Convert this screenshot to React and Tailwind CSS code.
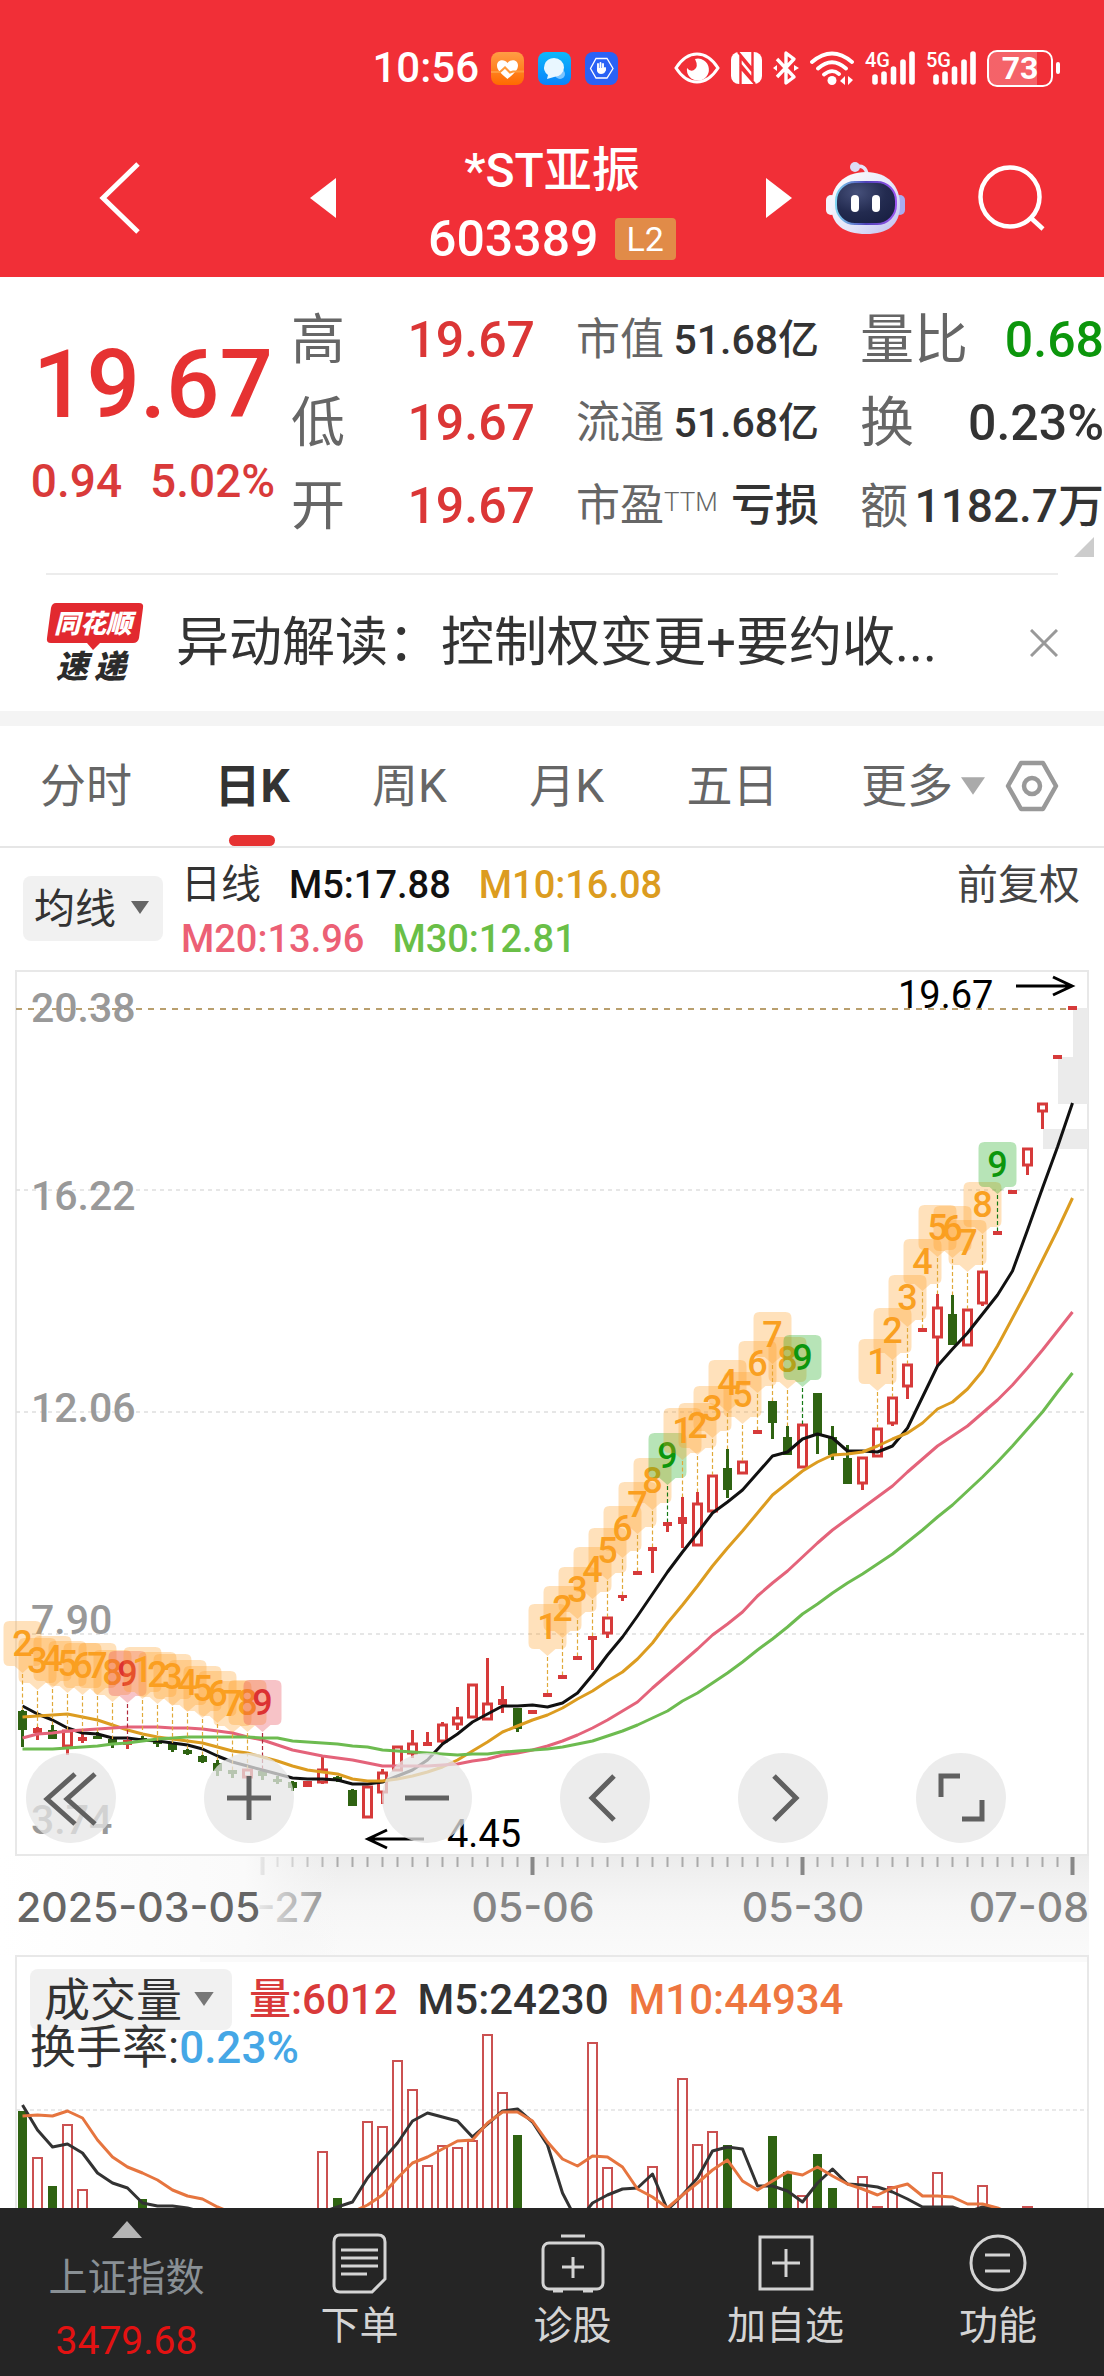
import React from "react";

const X0 = 22.5;
const STEP = 15;
const xAt = (i) => X0 + STEP * i;

/* [high, bodyTop, bodyBottom, low, kind]; r = rising, g = falling, s = solid rising */
const candles = [
  [1710, 1711, 1730, 1747, "g"], [1727, 1728, 1733, 1740, "s"], [1725, 1730, 1739, 1739, "g"], [1730, 1730, 1747, 1755, "r"],
  [1732, 1737, 1741, 1743, "s"], [1732, 1736, 1739, 1739, "g"], [1739, 1739, 1743, 1748, "g"], [1740, 1740, 1745, 1749, "s"],
  [1736, 1738, 1742, 1742, "g"], [1741, 1741, 1744, 1747, "g"], [1743, 1743, 1750, 1752, "g"], [1749, 1750, 1754, 1755, "g"],
  [1755, 1756, 1762, 1763, "g"], [1760, 1763, 1771, 1776, "g"], [1770, 1770, 1774, 1778, "g"], [1769, 1769, 1778, 1778, "r"],
  [1769, 1771, 1776, 1780, "g"], [1776, 1779, 1782, 1784, "g"], [1781, 1782, 1788, 1791, "g"], [1781, 1781, 1787, 1787, "s"],
  [1757, 1769, 1783, 1784, "r"], [1776, 1777, 1780, 1782, "g"], [1789, 1790, 1806, 1806, "g"], [1786, 1786, 1818, 1818, "r"],
  [1769, 1772, 1793, 1804, "r"], [1746, 1746, 1771, 1771, "r"], [1730, 1743, 1754, 1758, "r"], [1732, 1742, 1746, 1746, "s"],
  [1722, 1724, 1742, 1744, "r"], [1707, 1717, 1725, 1730, "r"], [1684, 1684, 1718, 1718, "r"], [1658, 1703, 1720, 1720, "r"],
  [1686, 1699, 1705, 1713, "s"], [1708, 1708, 1729, 1732, "g"], [1710, 1710, 1714, 1714, "s"], [1693, 1693, 1697, 1697, "s"],
  [1675, 1675, 1679, 1679, "s"], [1656, 1656, 1660, 1660, "s"], [1636, 1636, 1640, 1670, "s"], [1617, 1617, 1634, 1638, "r"],
  [1595, 1595, 1598, 1601, "s"], [1571, 1571, 1575, 1575, "s"], [1547, 1547, 1551, 1573, "s"], [1522, 1522, 1526, 1532, "s"],
  [1497, 1517, 1524, 1548, "s"], [1492, 1503, 1546, 1546, "r"], [1475, 1475, 1512, 1512, "r"], [1449, 1468, 1490, 1498, "g"],
  [1461, 1461, 1474, 1474, "r"], [1430, 1430, 1434, 1434, "s"], [1401, 1401, 1423, 1439, "g"], [1426, 1437, 1455, 1455, "g"],
  [1424, 1424, 1468, 1468, "r"], [1393, 1393, 1434, 1454, "g"], [1426, 1437, 1455, 1460, "g"], [1445, 1458, 1484, 1484, "g"],
  [1457, 1457, 1484, 1490, "r"], [1428, 1428, 1457, 1457, "r"], [1397, 1397, 1424, 1426, "r"], [1364, 1364, 1387, 1399, "r"],
  [1328, 1328, 1332, 1332, "s"], [1294, 1307, 1338, 1366, "r"], [1295, 1314, 1345, 1345, "g"], [1309, 1309, 1346, 1346, "r"],
  [1271, 1271, 1304, 1306, "r"], [1231, 1231, 1235, 1235, "s"], [1190, 1190, 1194, 1194, "s"], [1148, 1148, 1166, 1175, "r"],
  [1103, 1103, 1112, 1129, "r"], [1055, 1055, 1059, 1059, "s"], [1006, 1006, 1010, 1010, "s"],
];

const ma5 = [1706, 1714, 1720, 1728, 1733, 1734, 1738, 1738, 1740, 1741, 1743, 1745, 1749, 1756, 1762, 1766, 1770, 1774, 1778, 1779, 1779, 1780, 1784, 1784, 1782, 1776, 1770, 1760, 1744, 1734, 1722, 1714, 1706, 1706, 1705, 1707, 1703, 1693, 1675, 1655, 1637, 1616, 1594, 1572, 1552, 1533, 1513, 1502, 1490, 1473, 1456, 1452, 1439, 1434, 1438, 1451, 1451, 1452, 1446, 1428, 1397, 1366, 1349, 1333, 1314, 1295, 1271, 1230, 1188, 1147, 1103];
const ma10 = [1717, 1716, 1715, 1714, 1717, 1720, 1725, 1730, 1734, 1737, 1739, 1741, 1743, 1747, 1751, 1753, 1757, 1761, 1766, 1770, 1772, 1774, 1779, 1781, 1781, 1779, 1776, 1772, 1767, 1760, 1751, 1742, 1732, 1726, 1720, 1715, 1708, 1699, 1691, 1681, 1672, 1659, 1643, 1623, 1605, 1586, 1566, 1548, 1531, 1513, 1495, 1483, 1471, 1462, 1455, 1454, 1452, 1446, 1439, 1433, 1423, 1409, 1402, 1389, 1371, 1346, 1318, 1290, 1260, 1230, 1198];
const ma20 = [1738, 1734, 1733, 1731, 1730, 1729, 1728, 1727, 1727, 1727, 1728, 1728, 1729, 1731, 1733, 1737, 1740, 1745, 1750, 1753, 1756, 1758, 1760, 1763, 1766, 1766, 1766, 1766, 1765, 1764, 1761, 1759, 1755, 1753, 1750, 1746, 1741, 1735, 1728, 1720, 1711, 1702, 1688, 1675, 1662, 1649, 1635, 1624, 1612, 1596, 1583, 1571, 1557, 1543, 1530, 1519, 1508, 1497, 1486, 1472, 1459, 1446, 1436, 1426, 1413, 1400, 1385, 1368, 1350, 1331, 1312];
const ma30 = [1749, 1749, 1749, 1748, 1747, 1746, 1744, 1743, 1741, 1739, 1738, 1737, 1737, 1737, 1737, 1737, 1738, 1738, 1741, 1742, 1743, 1744, 1746, 1747, 1750, 1751, 1752, 1753, 1754, 1755, 1754, 1754, 1752, 1751, 1750, 1749, 1747, 1744, 1741, 1736, 1731, 1725, 1718, 1711, 1701, 1693, 1683, 1673, 1662, 1650, 1639, 1627, 1614, 1604, 1593, 1583, 1574, 1564, 1554, 1542, 1530, 1517, 1505, 1491, 1477, 1462, 1446, 1429, 1412, 1392, 1373];

/* runs of the nine-count signal: first candle, first number, colour of the nine */
const runs = [
  [0, 2, "red"], [8, 1, "red"], [35, 1, "green"], [44, 1, "green"], [57, 1, "green"],
];
const tones = {
  orange: { fill: "#ff9d1e", text: "#f9a021", line: "#e0a93a" },
  red: { fill: "#e63946", text: "#dc3232", line: "#b02a3a" },
  green: { fill: "#12a512", text: "#0c960c", line: "#157a15" },
};
const marks = runs.flatMap(([start, first, nine]) =>
  Array.from({ length: 10 - first }, (_, k) => ({
    i: start + k,
    n: first + k,
    tone: first + k === 9 ? nine : "orange",
  }))
);

const bars = [
  [0, 2111, "g"], [1, 2157, "r"], [2, 2186, "g"], [3, 2124, "r"], [4, 2189, "r"], [8, 2199, "g"],
  [20, 2151, "r"], [21, 2198, "g"], [23, 2121, "r"], [24, 2126, "r"], [25, 2060, "r"], [26, 2089, "r"],
  [27, 2165, "r"], [28, 2145, "r"], [29, 2147, "r"], [30, 2140, "r"], [31, 2034, "r"], [32, 2092, "r"], [33, 2135, "g"],
  [38, 2042, "r"], [39, 2167, "r"], [42, 2166, "r"], [44, 2078, "r"], [45, 2144, "r"], [46, 2131, "r"], [47, 2145, "g"],
  [50, 2136, "g"], [51, 2172, "g"], [52, 2195, "r"], [53, 2154, "g"], [54, 2188, "g"], [56, 2176, "r"], [57, 2206, "r"],
  [58, 2186, "r"], [61, 2172, "r"], [64, 2185, "r"], [67, 2206, "r"],
];
const vol5 = [2105, 2130, 2147, 2144, 2153, 2173, 2183, 2188, 2203, 2206, 2206, 2208, 2212, 2216, 2220, 2220, 2220, 2220, 2218, 2216, 2212, 2207, 2202, 2178, 2160, 2143, 2121, 2113, 2117, 2121, 2137, 2124, 2111, 2109, 2122, 2145, 2193, 2222, 2203, 2195, 2189, 2188, 2174, 2210, 2195, 2178, 2151, 2147, 2149, 2186, 2186, 2191, 2202, 2183, 2169, 2184, 2185, 2187, 2192, 2199, 2207, 2207, 2207, 2212, 2207, 2209, 2216];
const vol10 = [2116, 2115, 2116, 2111, 2118, 2140, 2157, 2167, 2173, 2180, 2190, 2196, 2199, 2207, 2213, 2218, 2220, 2220, 2220, 2220, 2220, 2218, 2212, 2205, 2195, 2178, 2163, 2157, 2149, 2141, 2140, 2123, 2112, 2112, 2121, 2142, 2159, 2166, 2156, 2157, 2167, 2189, 2197, 2208, 2195, 2183, 2170, 2160, 2181, 2190, 2181, 2172, 2175, 2167, 2176, 2184, 2189, 2195, 2188, 2184, 2196, 2196, 2197, 2204, 2204, 2208, 2214];

const points = (ys) => ys.map((y, i) => `${xAt(i)},${y}`).join(" ");

const RED = "#d63a3a";
const GREEN = "#2f6312";

function Line({ ys, color, width = 3 }) {
  return <polyline points={points(ys)} fill="none" stroke={color} strokeWidth={width} strokeLinejoin="round" />;
}

function Candle({ i, data }) {
  const [high, top, bottom, low, kind] = data;
  const x = xAt(i);
  const color = kind === "g" ? GREEN : RED;
  return (
    <g>
      {high < top && <rect x={x - 1.5} y={high} width="3" height={top - high} fill={color} />}
      {low > bottom && <rect x={x - 1.5} y={bottom} width="3" height={low - bottom} fill={color} />}
      {kind === "r" ? (
        <rect x={x - 4} y={top + 1} width="8" height={bottom - top - 2} fill="#fff" stroke={color} strokeWidth="3" />
      ) : (
        <rect x={x - 4.5} y={top} width="9" height={bottom - top} fill={color} />
      )}
    </g>
  );
}

function Mark({ i, n, tone }) {
  const x = xAt(i);
  const high = candles[i][0];
  const top = high - 89;
  const c = tones[tone];
  return (
    <g>
      <path
        d={`M${x - 13} ${top}h26q6 0 6 6v33q0 6-6 6h-5l-8 7l-8-7h-5q-6 0-6-6v-33q0-6 6-6z`}
        fill={c.fill}
        fillOpacity="0.3"
      />
      <line x1={x} x2={x} y1={top + 53} y2={high} stroke={c.line} strokeWidth="1.2" strokeDasharray="4 2.5" />
      <text x={x} y={top + 35} textAnchor="middle" fontSize="36" fontWeight="500" fill={c.text}>{n}</text>
    </g>
  );
}

function PriceChart() {
  return (
    <svg viewBox="0 970 1104 985" className="block w-full" role="img" aria-label="日K线图">
      <defs>
        <linearGradient id="axisShade" x1="0" y1="0" x2="0" y2="1">
          <stop offset="0" stopColor="#ececec" />
          <stop offset="0.5" stopColor="#f6f6f6" />
          <stop offset="1" stopColor="#fafafa" />
        </linearGradient>
        <linearGradient id="axisFade" x1="0" y1="0" x2="1" y2="0">
          <stop offset="0" stopColor="#fff" />
          <stop offset="0.72" stopColor="#fafafa" />
          <stop offset="1" stopColor="#f4f4f4" stopOpacity="0" />
        </linearGradient>
      </defs>
      <path d="M16 971H1088V1855H16Z" fill="#fff" stroke="#e8e8e8" strokeWidth="2" />
      {[1190, 1412, 1634].map((y) => (
        <line key={y} x1="16" x2="1088" y1={y} y2={y} stroke="#dedede" strokeWidth="1.5" strokeDasharray="4 4" />
      ))}
      <line x1="16" x2="1088" y1="1009" y2="1009" stroke="#b99f6e" strokeWidth="2" strokeDasharray="6 6" />
      <g fill="#ebebeb">
        <rect x="1073" y="1008" width="15" height="49" />
        <rect x="1058" y="1057" width="30" height="47" />
        <rect x="1043" y="1129" width="45" height="20" />
      </g>
      <g fill="#999" fontSize="41" fontWeight="500">
        <text x="31" y="1022">20.38</text>
        <text x="31" y="1210">16.22</text>
        <text x="31" y="1422">12.06</text>
        <text x="31" y="1634">7.90</text>
        <text x="31" y="1834">3.74</text>
      </g>
      {candles.map((c, i) => <Candle key={i} i={i} data={c} />)}
      <Line ys={ma5} color="#111" />
      <Line ys={ma10} color="#dc9c20" />
      <Line ys={ma20} color="#e4637a" />
      <Line ys={ma30} color="#6dbb50" />
      {marks.map((m) => <Mark key={m.i} {...m} />)}
      <g fill="#000" fontSize="38">
        <text x="898" y="1008">19.67</text>
        <text x="447" y="1847">4.45</text>
      </g>
      <g fill="none" stroke="#000" strokeWidth="3">
        <path d="M1016 986H1071M1053 977L1072 986L1053 995" />
        <path d="M424 1839H369M387 1830L368 1839L387 1848" />
      </g>
      <rect x="0" y="1856" width="1089" height="99" fill="url(#axisShade)" />
      {Array.from({ length: 55 }, (_, k) => k + 16).map((i) => {
        const major = (i - 16) % 18 === 0;
        return (
          <rect key={i} x={xAt(i) - (major ? 2 : 1)} y="1857" width={major ? 4 : 2} height={major ? 18 : 10} fill={major ? "#888" : "#aaa"} />
        );
      })}
      <g fill="#858585" fontSize="41" fontWeight="500" fontFamily="Inter, sans-serif">
        <text x="323" y="1922" textAnchor="end">-27</text>
        <text x="533" y="1922" textAnchor="middle">05-06</text>
        <text x="803" y="1922" textAnchor="middle">05-30</text>
        <text x="1089" y="1922" textAnchor="end">07-08</text>
      </g>
      <rect x="0" y="1856" width="340" height="99" fill="url(#axisFade)" />
      <text x="16" y="1922" fontSize="41" fontWeight="500" fontFamily="Inter, sans-serif" fill="#666">2025-03-05</text>
    </svg>
  );
}

function VolumeChart() {
  return (
    <svg viewBox="0 1955 1104 253" className="block w-full" role="img" aria-label="成交量图">
      <rect x="200" y="1955" width="889" height="7" fill="#fafafa" />
      <path d="M16 2210V1956H1088V2210" fill="none" stroke="#e8e8e8" strokeWidth="2" />
      <line x1="16" x2="1088" y1="2110" y2="2110" stroke="#e2e2e2" strokeWidth="1.5" strokeDasharray="4 3" />
      {bars.map(([i, y, kind]) =>
        kind === "g" ? (
          <rect key={i} x={xAt(i) - 4.5} y={y} width="9" height={2220 - y} fill={GREEN} />
        ) : (
          <rect key={i} x={xAt(i) - 4.5} y={y + 1} width="9" height={2220 - y} fill="#fff" stroke="#cb5151" strokeWidth="2" />
        )
      )}
      <Line ys={vol5} color="#333" />
      <Line ys={vol10} color="#e6753f" />
    </svg>
  );
}

function Caret({ className }) {
  return (
    <svg viewBox="0 0 18 13" className={className} aria-hidden="true">
      <path d="M0 0h18L9 13z" fill="currentColor" />
    </svg>
  );
}

function Signal({ label }) {
  return (
    <svg viewBox="0 0 50 36" className="h-9 w-[50px] overflow-visible" role="img" aria-label={label}>
      <text x="0" y="17" fontSize="20" fontWeight="500" fill="#fff">{label}</text>
      <g stroke="#fff" strokeWidth="5.6" strokeLinecap="round">
        <path d="M10 27V32M19 24V32M28.500 19V32M38 12V32M47 4V32" />
      </g>
    </svg>
  );
}

function StatusBar() {
  return (
    <div className="flex items-center justify-end pr-11 pt-11 text-white">
      <time className="mr-3 text-[42px] font-medium leading-[48px]">10:56</time>
      <div className="mr-14 flex items-center gap-[14px]">
        <svg viewBox="0 0 33 33" className="size-[33px]" aria-label="健康">
          <defs>
            <linearGradient id="healthBg" x1="0" y1="0" x2="0" y2="1"><stop stopColor="#ff9d45" /><stop offset="1" stopColor="#ff6a00" /></linearGradient>
          </defs>
          <rect width="33" height="33" rx="8" fill="url(#healthBg)" />
          <path d="M16.500 27C10 21.500 6 18 6 13.500C6 7.500 13.500 6.500 16.500 11C19.500 6.500 27 7.500 27 13.500C27 18 23 21.500 16.500 27Z" fill="#fff" />
          <path d="M0 20H9L14 15.500L19 20.500L22 19.500H33" fill="none" stroke="#ff9a3c" strokeWidth="2" />
        </svg>
        <svg viewBox="0 0 33 33" className="size-[33px]" aria-label="信息">
          <defs>
            <linearGradient id="chatBg" x1="0" y1="0" x2="0" y2="1"><stop stopColor="#0db8fb" /><stop offset="1" stopColor="#0a83fb" /></linearGradient>
          </defs>
          <rect width="33" height="33" rx="8" fill="url(#chatBg)" />
          <circle cx="22" cy="22" r="5" fill="#7cc5ff" />
          <path d="M16 6a10 9.500 0 1 1 0 19l-7 2l1-4A10 9.500 0 0 1 16 6z" fill="#e9f7ff" />
        </svg>
        <svg viewBox="0 0 33 33" className="size-[33px]" aria-label="隐私保护">
          <rect width="33" height="33" rx="8" fill="#2a62f5" />
          <path d="M11 6.500H22L28 16.500L22 26H11L5.500 16.500Z" fill="none" stroke="#fff" strokeWidth="1.300" />
          <path d="M13 12v6M15.500 11v7M18 12v6M20 18v-2" stroke="#fff" strokeWidth="1.900" strokeLinecap="round" />
          <path d="M12 16h8.500v3q-1 3-4.500 3q-3 0-4-3z" fill="#fff" />
        </svg>
      </div>
      <div className="flex items-center gap-[11px]">
        <svg viewBox="0 0 46 32" className="h-8 w-[46px]" aria-label="护眼模式">
          <path d="M2 16Q11 2 23 2T44 16Q35 30 23 30T2 16Z" fill="none" stroke="#fff" strokeWidth="3" />
          <path d="M21 7A11 11 0 1 1 13 16Q16 20 20 18Q25 15 21 7Z" fill="#fff" />
        </svg>
        <svg viewBox="0 0 31 32" className="h-8 w-[31px]" aria-label="NFC">
          <rect width="31" height="32" rx="8" fill="#fff" />
          <path d="M9.500 32V5L22 20M21.500 0V27L9 12M7 0L22 18M9 15L24 32" fill="none" stroke="#f12f37" strokeWidth="2.400" />
        </svg>
        <svg viewBox="0 0 26 36" className="h-9 w-[26px]" aria-label="蓝牙">
          <path d="M4 9L21 27L13 33V3L21 9L4 27" fill="none" stroke="#fff" strokeWidth="3.400" strokeLinejoin="round" />
          <path d="M0 18L4 15V21ZM26 18L21 15V21Z" fill="#fff" />
        </svg>
        <svg viewBox="0 0 44 34" className="h-[34px] w-11" aria-label="无线网络">
          <g fill="none" stroke="#fff" strokeWidth="3.800" strokeLinecap="round">
            <path d="M2 11Q22-6 42 11M8 17.500Q22 5 36 17.500M14 23.500Q22 17 29 23" />
          </g>
          <circle cx="22" cy="29.500" r="4.500" fill="#fff" />
          <path d="M30 30L35 25V34ZM38 25V34L43 29Z" fill="#fff" />
        </svg>
        <Signal label="4G" />
        <Signal label="5G" />
        <div className="flex items-center gap-[3px]">
          <div className="h-[37px] w-[66px] rounded-[10px] border-2 border-white bg-linear-to-r from-white/25 from-78% to-transparent to-78% text-center text-[32px] font-bold leading-[33px]">73</div>
          <div className="h-3 w-1 rounded-sm bg-white" />
        </div>
      </div>
    </div>
  );
}

function Robot() {
  return (
    <svg viewBox="0 0 80 74" className="h-[74px] w-20" aria-hidden="true">
      <defs>
        <linearGradient id="shell" x1="0" y1="0" x2="1" y2="1"><stop stopColor="#fff" /><stop offset="0.6" stopColor="#e3e4f8" /><stop offset="1" stopColor="#bcbdf0" /></linearGradient>
        <radialGradient id="visor" cx="0.35" cy="0.25" r="0.8"><stop stopColor="#46507a" /><stop offset="0.6" stopColor="#232b50" /><stop offset="1" stopColor="#1a2144" /></radialGradient>
        <linearGradient id="rim"><stop stopColor="#7fd4f2" /><stop offset="0.5" stopColor="#4e41b8" /><stop offset="1" stopColor="#9a55ee" /></linearGradient>
      </defs>
      <path d="M29 6Q40 3 41 14" fill="none" stroke="#e6e4f8" strokeWidth="3.500" />
      <circle cx="29" cy="6" r="5" fill="#dddcf5" />
      <rect x="0" y="34" width="10" height="20" rx="5" fill="#f3f3fc" />
      <rect x="69" y="34" width="10" height="20" rx="5" fill="#a9acf0" />
      <path d="M40 11C62 11 74 25 74 44C74 64 62 73 40 73C18 73 5 64 5 44C5 25 18 11 40 11Z" fill="url(#shell)" />
      <rect x="10" y="21" width="60" height="42" rx="19" fill="url(#visor)" stroke="url(#rim)" strokeWidth="2" />
      <rect x="25" y="34" width="8" height="17" rx="4" fill="#fff" />
      <rect x="46" y="34" width="8" height="17" rx="4" fill="#fff" />
    </svg>
  );
}

function Header() {
  return (
    <header className="bg-[#f12f37] text-white">
      <StatusBar />
      <div className="grid grid-cols-[1fr_240px_1fr] items-center pt-[46px] pb-[3px]">
        <div className="flex items-center justify-between pb-4 pl-[98px] pr-24">
          <button type="button" aria-label="返回" className="block">
            <svg viewBox="0 0 44 72" className="h-[72px] w-11"><path d="M40 2L5 36L40 70" fill="none" stroke="#fff" strokeWidth="5" /></svg>
          </button>
          <button type="button" aria-label="上一只" className="block">
            <svg viewBox="0 0 26 40" className="h-10 w-[26px]"><path d="M26 0V40L0 20Z" fill="#fff" /></svg>
          </button>
        </div>
        <div className="flex flex-col items-center whitespace-nowrap">
          <h1 className="text-[48px] font-medium leading-[66px]">*ST亚振</h1>
          <div className="flex items-center gap-4 leading-[70px]">
            <span className="text-[50px] font-medium">603389</span>
            <span className="rounded-sm bg-[#e18b48] px-3 text-[34px] leading-[42px]">L2</span>
          </div>
        </div>
        <div className="flex items-center pb-4 pl-[94px]">
          <button type="button" aria-label="下一只" className="mr-[34px] block">
            <svg viewBox="0 0 26 40" className="h-10 w-[26px]"><path d="M0 0V40L26 20Z" fill="#fff" /></svg>
          </button>
          <button type="button" aria-label="智能助手" className="block"><Robot /></button>
          <button type="button" aria-label="搜索" className="ml-auto mr-[58px] block">
            <svg viewBox="0 0 68 68" className="size-[68px]"><g fill="none" stroke="#fff" strokeWidth="4.500"><circle cx="32" cy="33" r="29.500" /><path d="M53 54L65 65" /></g></svg>
          </button>
        </div>
      </div>
    </header>
  );
}

function Row({ label, sup, value, labelClass, valueClass }) {
  return (
    <div className="flex items-center justify-between leading-[83px] whitespace-nowrap">
      <dt className={labelClass}>{label}{sup && <span className="align-[10px] text-[26px] leading-none font-light">{sup}</span>}</dt>
      <dd className={valueClass}>{value}</dd>
    </div>
  );
}

function Quote() {
  const big = "text-[54px] text-[#666]";
  const mid = "text-[44px] text-[#666]";
  const red = "text-[50px] font-medium text-[#db3636]";
  const dark = "text-[41px] font-medium text-[#333]";
  return (
    <section className="relative grid grid-cols-[277fr_258fr_284fr_285fr] pt-[22px] pb-[25px]">
      <div className="flex flex-col items-center pl-[29px] text-[#e63232]">
        <strong className="pt-8 text-[94px] font-medium leading-[108px]">19.67</strong>
        <p className="flex gap-7 pt-3 text-[46px] font-medium leading-[60px] text-[#d93a3a]"><span>0.94</span><span>5.02%</span></p>
      </div>
      <dl className="pl-[14px]">
        <Row label="高" value="19.67" labelClass={big} valueClass={red} />
        <Row label="低" value="19.67" labelClass={big} valueClass={red} />
        <Row label="开" value="19.67" labelClass={big} valueClass={red} />
      </dl>
      <dl className="pl-[41px]">
        <Row label="市值" value="51.68亿" labelClass={mid} valueClass={dark} />
        <Row label="流通" value="51.68亿" labelClass={mid} valueClass={dark} />
        <Row label="市盈" sup="TTM" value="亏损" labelClass={mid} valueClass="text-[44px] font-medium text-[#333]" />
      </dl>
      <dl className="pl-[41px]">
        <Row label="量比" value="0.68" labelClass={big} valueClass="text-[50px] font-medium text-[#0c960c]" />
        <Row label="换" value="0.23%" labelClass={big} valueClass="text-[50px] font-medium text-[#333]" />
        <Row label="额" value="1182.7万" labelClass="text-[48px] text-[#666]" valueClass="text-[46px] font-medium text-[#333]" />
      </dl>
      <svg viewBox="0 0 20 20" className="absolute right-[10px] bottom-4 size-5" aria-hidden="true"><path d="M20 0V20H0Z" fill="#ccc" /></svg>
    </section>
  );
}

function News() {
  return (
    <section className="mx-[46px] flex items-center border-t-2 border-[#ececec] py-[26px]">
      <svg viewBox="0 0 100 84" className="h-[84px] w-[100px] shrink-0 overflow-visible" role="img" aria-label="同花顺速递">
        <path d="M10 2H93Q98 2 97 7L93 37Q92 42 87 42H54L47 49L41 42H5Q0 42 1 37L5 7Q6 2 10 2Z" fill="#e2292f" />
        <text x="47" y="32" textAnchor="middle" fontSize="26" fontWeight="900" fontStyle="italic" fill="#fff">同花顺</text>
        <text x="10" y="77" fontSize="32" fontWeight="900" fontStyle="italic" fill="#2b2b2b">速</text>
        <text x="48" y="77" fontSize="32" fontWeight="900" fontStyle="italic" fill="#2b2b2b">递</text>
      </svg>
      <a href="#news" className="ml-[30px] flex-1 text-[53px] leading-[83px] whitespace-nowrap text-[#333]">异动解读：控制权变更+要约收...</a>
      <button type="button" aria-label="关闭" className="block">
        <svg viewBox="0 0 28 28" className="size-7"><path d="M1 1L27 27M27 1L1 27" stroke="#999" strokeWidth="3" /></svg>
      </button>
    </section>
  );
}

function Tabs() {
  const tabs = ["分时", "日K", "周K", "月K", "五日"];
  return (
    <nav className="flex items-center justify-between border-t-[15px] border-b-2 border-t-[#f4f4f4] border-b-[#e6e6e6] pr-[45px] pl-10 text-[46px] text-[#666]">
      {tabs.map((t) => (
        <button key={t} type="button" aria-pressed={t === "日K"} className={t === "日K" ? "relative font-bold leading-[120px] text-[#333]" : "leading-[120px]"}>
          {t}
          {t === "日K" && <span className="absolute bottom-0 left-1/2 h-[11px] w-[46px] -translate-x-1/2 rounded-full bg-[#e63232]" />}
        </button>
      ))}
      <div className="flex items-center">
        <button type="button" aria-haspopup="menu" className="flex items-center gap-2 leading-[120px]">
          更多
          <Caret className="h-5 w-6 text-[#aaa]" />
        </button>
        <button type="button" aria-label="设置" className="ml-5 block">
          <svg viewBox="0 0 54 52" className="h-[52px] w-[54px]"><g fill="none" stroke="#999" strokeWidth="4.500" strokeLinejoin="round"><path d="M16 3H38L51 26L38 49H16L3 26Z" /><circle cx="27" cy="26" r="8" /></g></svg>
        </button>
      </div>
    </nav>
  );
}

function Averages() {
  return (
    <section className="flex items-start pt-[10px] pr-6 pb-1 pl-[23px] text-[38px] font-medium leading-[54px]">
      <div className="relative mt-[18px] text-[#333]">
        <select aria-label="主图指标" className="block h-[65px] w-[140px] appearance-none rounded-lg bg-[#f1f1f1] pl-[11px] text-[41px] font-normal">
          <option>均线</option>
        </select>
        <Caret className="pointer-events-none absolute top-[25px] right-[14px] h-[13px] w-[18px] text-[#666]" />
      </div>
      <div className="ml-[18px] flex-1">
        <div className="flex gap-7">
          <span className="text-[40px] font-normal text-[#333]">日线</span>
          <span className="text-[#111]">M5:17.88</span>
          <span className="text-[#dc9c20]">M10:16.08</span>
        </div>
        <div className="flex gap-7">
          <span className="text-[#ec6075]">M20:13.96</span>
          <span className="text-[#6abf47]">M30:12.81</span>
        </div>
      </div>
      <span className="text-[41px] font-normal text-[#444]">前复权</span>
    </section>
  );
}

const glyphs = {
  fast: <path d="M36 8L8 33L36 58M56 8L28 33L56 58" />,
  plus: <path d="M10 32H54M32 10V54" />,
  minus: <path d="M10 32H54" />,
  left: <path d="M41 10L19 32L41 54" />,
  right: <path d="M23 10L45 32L23 54" />,
  full: <path d="M12 31V10H31M53 34V53H33" />,
};
const controls = [["fast", "收起"], ["plus", "放大"], ["minus", "缩小"], ["left", "向左"], ["right", "向右"], ["full", "全屏"]];

function ChartPanel() {
  return (
    <section className="relative">
      <PriceChart />
      <div className="absolute right-[98px] bottom-[112px] left-[26px] flex justify-between">
        {controls.map(([key, label]) => (
          <button key={key} type="button" aria-label={label} className="flex size-[90px] items-center justify-center rounded-full bg-[#e6e6e6]/75">
            <svg viewBox="0 0 64 64" className="size-16" fill="none" stroke="#606060" strokeWidth="5">{glyphs[key]}</svg>
          </button>
        ))}
      </div>
    </section>
  );
}

function VolumePanel() {
  return (
    <section className="relative">
      <VolumeChart />
      <div className="absolute top-[14px] left-[30px] text-[42px] font-medium leading-[60px] text-[#333]">
        <div className="flex items-center">
          <div className="relative mr-[17px]">
            <select aria-label="副图指标" className="block h-[61px] w-[202px] appearance-none rounded-lg bg-[#f1f1f1] pl-[14px] text-[46px] font-normal leading-[60px]">
              <option>成交量</option>
            </select>
            <Caret className="pointer-events-none absolute top-[23px] right-[18px] h-[14px] w-5 text-[#777]" />
          </div>
          <span className="mr-5 text-[#d93a3a]">量:6012</span>
          <span className="mr-5">M5:24230</span>
          <span className="text-[#ee7640]">M10:44934</span>
        </div>
        <div className="relative z-10 -mt-2 text-[46px] font-normal leading-[50px]">换手率:<span className="text-[44px] font-medium text-[#45a7e6]">0.23%</span></div>
      </div>
    </section>
  );
}

const navIcons = {
  order: <><path d="M8 2H46Q53 2 53 9V46L40 59H8Q2 59 2 52V9Q2 2 8 2Z" /><path d="M9 17H46M9 25H46M9 33H46M9 41H35" /></>,
  diagnose: <><rect x="2" y="10" width="60" height="46" rx="6" /><path d="M20 3H44M32 24V45M21 34H43M12 58H22M42 58H52" /></>,
  add: <><rect x="2" y="4" width="52" height="52" /><path d="M28 16V44M14 30H42" /></>,
  more: <><circle cx="29" cy="30" r="27" /><path d="M16 22H41M16 38H41" /></>,
};
const navItems = [["order", "下单", "0 0 55 61", "h-[61px] w-[55px]"], ["diagnose", "诊股", "0 0 64 61", "h-[61px] w-16"], ["add", "加自选", "0 0 56 61", "h-[61px] w-14"], ["more", "功能", "0 0 58 61", "h-[61px] w-[58px]"]];

function BottomNav() {
  return (
    <nav className="grid grid-cols-[253fr_213fr_213fr_213fr_212fr] bg-[#252525] text-[39px] text-[#d4d4d4]">
      <button type="button" className="flex flex-col items-center pt-[13px] pb-[2px]">
        <svg viewBox="0 0 30 17" className="h-[17px] w-[30px]" aria-hidden="true"><path d="M15 0L30 17H0Z" fill="#b5b5b5" /></svg>
        <span className="pt-[10px] leading-[60px] text-[#899095]">上证指数</span>
        <span className="leading-[66px] text-[#e31212]">3479.68</span>
      </button>
      {navItems.map(([key, label, box, size]) => (
        <button key={key} type="button" className="flex flex-col items-center pt-[25px]">
          <svg viewBox={box} className={size} fill="none" stroke="#d4d4d4" strokeWidth="3">{navIcons[key]}</svg>
          <span className="pt-1 leading-[56px]">{label}</span>
        </button>
      ))}
    </nav>
  );
}

export default function App() {
  return (
    <main className="w-full overflow-x-hidden bg-white font-['Roboto','Noto_Sans_CJK_SC',sans-serif]">
      <Header />
      <Quote />
      <News />
      <Tabs />
      <Averages />
      <ChartPanel />
      <VolumePanel />
      <BottomNav />
    </main>
  );
}
